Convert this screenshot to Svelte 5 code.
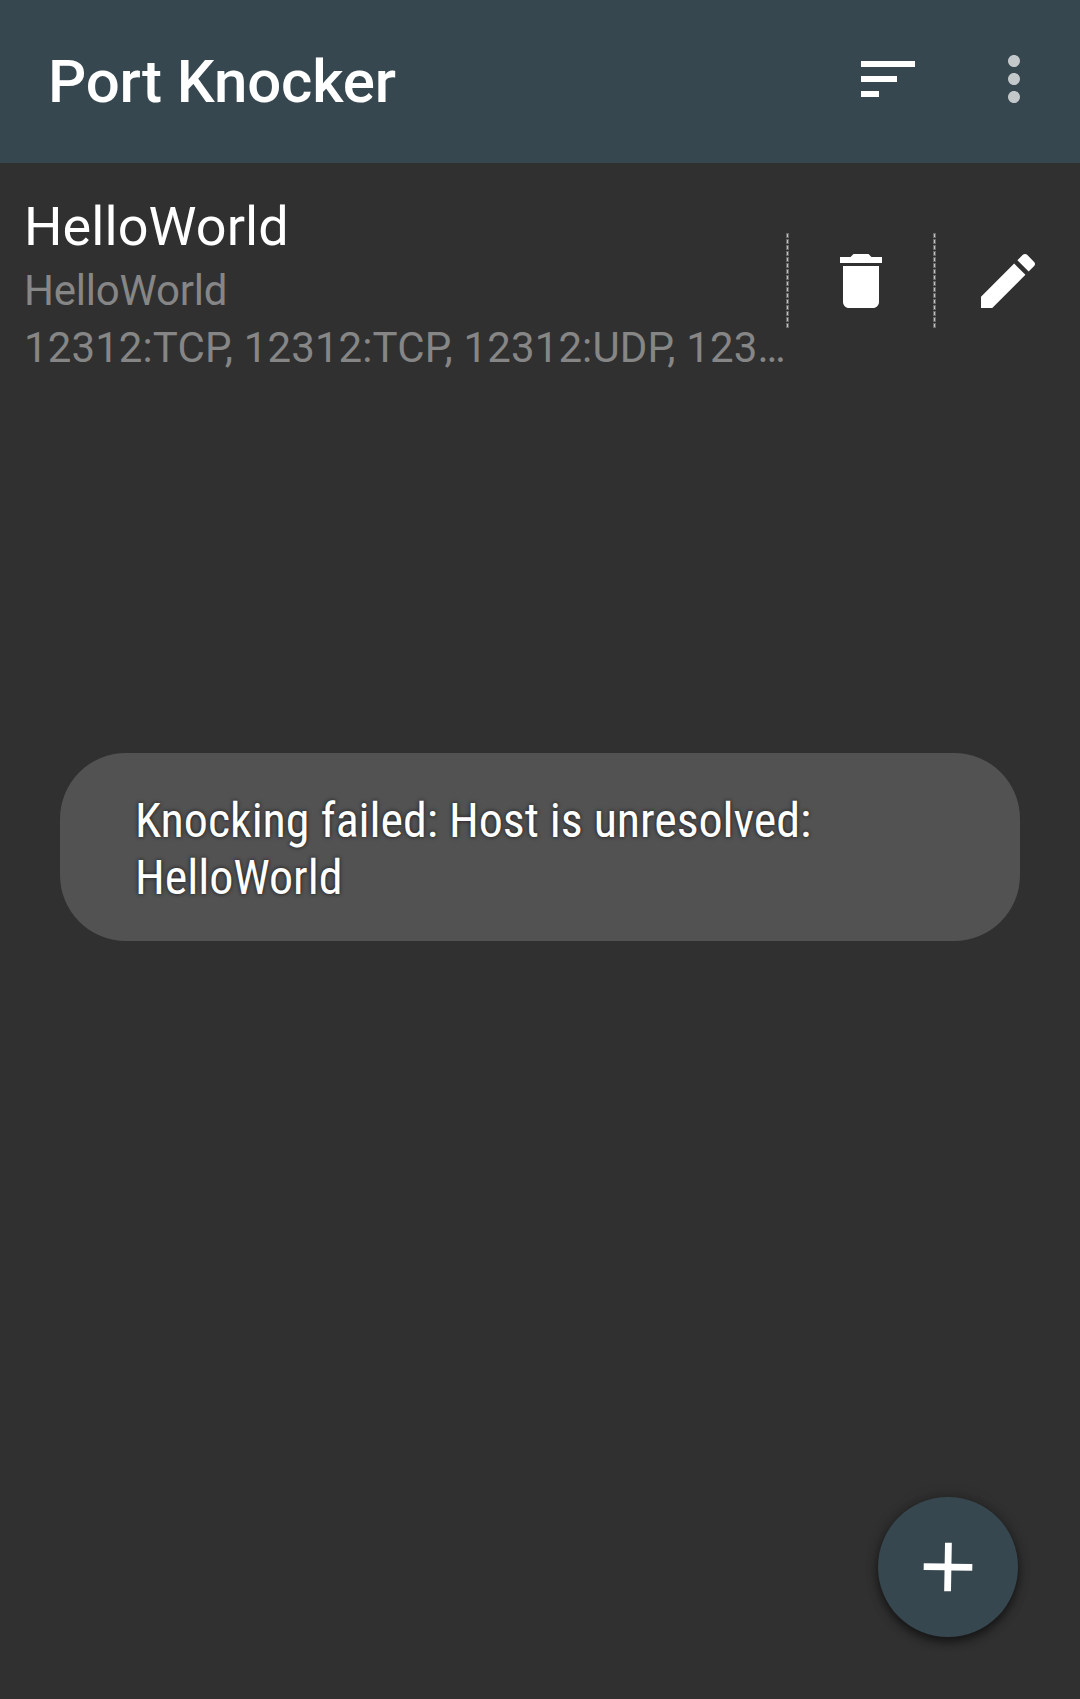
<script>
  const knocks = [
    {
      name: 'HelloWorld',
      host: 'HelloWorld',
      ports: '12312:TCP, 12312:TCP, 12312:UDP, 123…'
    }
  ];
  const dashes = Array.from({ length: 16 }, (_, i) => i * 6);
</script>

{#snippet divider()}
  <svg class="divider" width="3" height="96" viewBox="0 0 3 96" aria-hidden="true">
    {#each dashes as y}
      <rect x="0" {y} width="3" height="5" fill="#686868" />
      <rect x="1" y={y + 1} width="1" height="3" fill="#c4c4c4" />
    {/each}
  </svg>
{/snippet}

<main class="screen">
  <header class="bar">
    <h1>Port Knocker</h1>
    <button class="sort" aria-label="Sort">
      <svg width="72" height="72" viewBox="0 0 24 24" fill="#fff"><path d="M3 18h6v-2H3v2zM3 6v2h18V6H3zm0 7h12v-2H3v2z" /></svg>
    </button>
    <button class="more" aria-label="More options">
      <svg width="72" height="72" viewBox="0 0 24 24" fill="#c3c8ca"><path d="M12 8c1.1 0 2-.9 2-2s-.9-2-2-2-2 .9-2 2 .9 2 2 2zm0 2c-1.1 0-2 .9-2 2s.9 2 2 2 2-.9 2-2-.9-2-2-2zm0 6c-1.1 0-2 .9-2 2s.9 2 2 2 2-.9 2-2-.9-2-2-2z" /></svg>
    </button>
  </header>

  {#each knocks as knock}
    <section class="row">
      <div class="info">
        <div class="name">{knock.name}</div>
        <div class="detail host">{knock.host}</div>
        <div class="detail ports">{knock.ports}</div>
      </div>
      {@render divider()}
      <button class="action" aria-label="Delete">
        <svg width="72" height="72" viewBox="0 0 24 24" fill="#fff"><path d="M6 19c0 1.1.9 2 2 2h8c1.1 0 2-.9 2-2V7H6v12zM19 4h-3.500l-1-1h-5l-1 1H5v2h14V4z" /></svg>
      </button>
      {@render divider()}
      <button class="action" aria-label="Edit">
        <svg width="72" height="72" viewBox="0 0 24 24" fill="#fff"><path d="M3 17.250V21h3.750L17.810 9.940l-3.750-3.750L3 17.250zM20.710 7.040c.39-.39.39-1.020 0-1.410l-2.340-2.340c-.39-.39-1.020-.39-1.410 0l-1.830 1.830 3.750 3.750 1.830-1.830z" /></svg>
      </button>
    </section>
  {/each}

  <div class="toast" role="status">
    <span class="message">Knocking failed: Host is unresolved:<br />HelloWorld</span>
  </div>

  <button class="fab" aria-label="Add">
    <svg width="72" height="72" viewBox="0 0 72 72" fill="#fff"><path transform="rotate(1 36 36)" d="M32.600 11.700h6.800v20.900h20.900v6.800H39.400v20.900h-6.800V39.400H11.700v-6.800h20.900z" /></svg>
  </button>
</main>

<style>
  :global(body) {
    background: #303030;
  }
  .screen {
    position: relative;
    width: 1080px;
    height: 1699px;
    overflow: hidden;
    background: #303030;
    color: #fff;
    font-family: Roboto, sans-serif;
  }
  button {
    display: flex;
    align-items: center;
    justify-content: center;
    padding: 0;
    border: 0;
    background: none;
  }
  svg {
    display: block;
    flex: none;
  }
  .bar {
    display: flex;
    box-sizing: border-box;
    height: 163px;
    padding: 0 30px 5px 48px;
    align-items: center;
    background: #37474f;
  }
  h1 {
    flex: 1;
    margin: 5px 0 0;
    font-size: 60px;
    line-height: 70px;
    font-weight: 500;
    letter-spacing: -0.17px;
  }
  .sort {
    margin-right: 54px;
  }
  .row {
    display: flex;
    align-items: center;
    height: 236px;
  }
  .info {
    flex: 1;
    min-width: 0;
    padding: 9px 0 0 24px;
  }
  .name {
    margin-bottom: 4px;
    font-size: 54px;
    line-height: 63px;
    letter-spacing: 0.08px;
  }
  .detail {
    color: #868686;
    font-size: 42px;
    line-height: 57px;
    white-space: nowrap;
  }
  .host {
    letter-spacing: -0.2px;
  }
  .ports {
    letter-spacing: 0.11px;
  }
  .action {
    width: 144px;
    height: 144px;
  }
  .toast {
    position: absolute;
    left: 60px;
    top: 753px;
    display: flex;
    box-sizing: border-box;
    width: 960px;
    height: 188px;
    padding: 4px 75px 0;
    align-items: center;
    border-radius: 66px;
    background: #525252;
  }
  .message {
    font-family: 'Roboto Condensed', Roboto, sans-serif;
    font-stretch: 75%;
    font-size: 48px;
    line-height: 57px;
    letter-spacing: -0.03px;
    text-shadow: 0 0 4px rgba(0, 0, 0, 0.73);
    white-space: nowrap;
  }
  .fab {
    position: absolute;
    left: 878px;
    top: 1497px;
    width: 140px;
    height: 140px;
    border-radius: 50%;
    background: #37474f;
    box-shadow: 0 5px 10px rgba(0, 0, 0, 0.5), 0 0 14px rgba(0, 0, 0, 0.22);
  }
</style>
